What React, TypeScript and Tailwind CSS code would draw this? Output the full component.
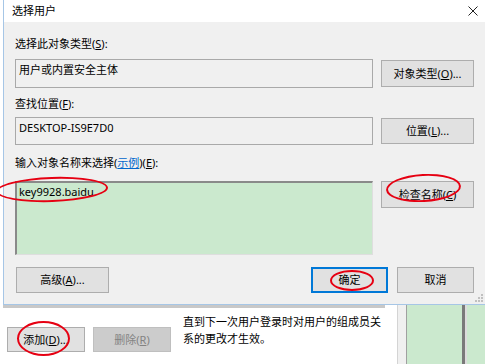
import React from "react";

const btn =
  "flex items-center justify-center bg-[#e1e1e1] border border-[#adadad] text-black";

function Ring({ cls }: { cls: string }) {
  return (
    <div
      className={`absolute rounded-[50%] border-2 border-[#e60012] pointer-events-none ${cls}`}
    />
  );
}

export default function App() {
  return (
    <div className="relative w-[485px] h-[364px] overflow-hidden bg-white text-[11px] leading-[16px] text-black font-['Noto_Sans','Noto_Sans_CJK_SC',sans-serif]">
      {/* dialog */}
      <div className="relative ml-[3px] w-[482px] h-[305px] border-l border-b border-[#a6c6e6] bg-[#f0f0f0] flex flex-col">
        <div className="h-[22px] shrink-0 bg-white flex items-center justify-between pl-[8px] pr-[7px]">
          <span>选择用户</span>
          <svg width="10" height="10" viewBox="0 0 10 10">
            <path d="M0.5 0.5L9.5 9.5M9.5 0.5L0.5 9.5" stroke="#222" strokeWidth="1" />
          </svg>
        </div>

        <div className="px-[11px] flex flex-col">
          <div className="mt-[14px] h-[16px]">
            选择此对象类型(<u>S</u>):
          </div>
          <div className="mt-[7px] flex items-center gap-[8px]">
            <div className="w-[358px] h-[29px] border border-[#a9a9a9] bg-[#f0f0f0] px-[3px] pt-[2px]">
              用户或内置安全主体
            </div>
            <div className={`${btn} w-[93px] h-[27px]`}>
              对象类型(<u>O</u>)...
            </div>
          </div>

          <div className="mt-[8px] h-[16px]">
            查找位置(<u>F</u>):
          </div>
          <div className="mt-[5px] flex items-center gap-[8px]">
            <div className="w-[358px] h-[28px] border border-[#a9a9a9] bg-[#f0f0f0] px-[3px] pt-[2px]">
              DESKTOP-IS9E7D0
            </div>
            <div className={`${btn} w-[93px] h-[26px]`}>
              位置(<u>L</u>)...
            </div>
          </div>

          <div className="mt-[10px] h-[16px]">
            输入对象名称来选择(<span className="text-[#0066cc] underline">示例</span>)(<u>E</u>):
          </div>
          <div className="mt-[10px] flex items-start gap-[8px]">
            <div className="w-[358px] h-[74px] border-t-2 border-l-2 border-t-[#8a8a8a] border-l-[#8a8a8a] border-r border-b border-r-[#dedede] border-b-[#dedede] bg-[#cbe9ce] px-[2px] pt-[1px]">
              key9928.baidu
            </div>
            <div className={`${btn} w-[93px] h-[27px]`}>
              检查名称(<u>C</u>)
            </div>
          </div>

          <div className="mt-[12px] flex items-center">
            <div className={`${btn} ml-[1px] w-[93px] h-[26px]`}>
              高级(<u>A</u>)...
            </div>
            <div className="flex-1" />
            <div className="flex items-center justify-center w-[77px] h-[26px] bg-[#e1e1e1] border-2 border-[#0078d7]">
              确定
            </div>
            <div className={`${btn} ml-[9px] w-[77px] h-[26px]`}>取消</div>
          </div>
        </div>

        <svg className="absolute right-[2px] bottom-[2px]" width="8" height="8" viewBox="0 0 8 8">
          <rect x="6" y="0" width="2" height="2" fill="#c0c0c0" />
          <rect x="3" y="3" width="2" height="2" fill="#c0c0c0" />
          <rect x="6" y="3" width="2" height="2" fill="#c0c0c0" />
          <rect x="0" y="6" width="2" height="2" fill="#c0c0c0" />
          <rect x="3" y="6" width="2" height="2" fill="#c0c0c0" />
          <rect x="6" y="6" width="2" height="2" fill="#c0c0c0" />
        </svg>
      </div>

      {/* window underneath */}
      <div className="flex h-[59px]">
        <div className="w-[397px] shrink-0 flex flex-col">
          <div className="ml-[3px] w-[382px] h-[3px] bg-[#c8c8c8]" />
          <div className="mt-[6px] flex items-start">
            <div className={`${btn} mt-[13px] ml-[7px] w-[78px] h-[25px]`}>
              添加(<u>D</u>)...
            </div>
            <div className="mt-[13px] ml-[8px] w-[78px] h-[25px] flex items-center justify-center bg-[#cccccc] border border-[#bfbfbf] text-[#838383]">
              删除(<u>R</u>)
            </div>
            <div className="ml-[12px] w-[200px] leading-[16.5px]">
              直到下一次用户登录时对用户的组成员关系的更改才生效。
            </div>
          </div>
        </div>
        <div className="w-[1px] bg-[#d4d4d4]" />
        <div className="w-[8px] bg-[#f0f0f0]" />
        <div className="w-[1px] bg-[#a0a0a0]" />
        <div className="w-[55px] bg-[#cbe9ce]" />
        <div className="w-[3px] bg-[#7a7a7a]" />
        <div className="w-[2px] bg-[#dcdcdc]" />
        <div className="flex-1 bg-[#cbe9ce]" />
      </div>

      {/* red annotations */}
      <Ring cls="left-[-4px] top-[177px] w-[112px] h-[25px] -rotate-2" />
      <Ring cls="left-[386px] top-[174px] w-[75px] h-[28px] -rotate-3" />
      <Ring cls="left-[330px] top-[270px] w-[44px] h-[21px]" />
      <Ring cls="left-[17px] top-[321px] w-[53px] h-[35px]" />
    </div>
  );
}
